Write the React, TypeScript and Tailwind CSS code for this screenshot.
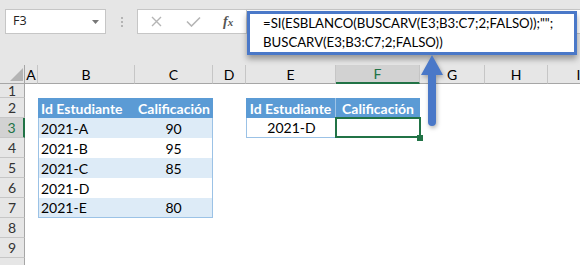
import React from "react";

function ColHeader({ label, selected }: { label: string; selected?: boolean }) {
  return (
    <div
      className={
        selected
          ? "flex items-center justify-center bg-[#d2d2d2] border-r border-r-[#c6c6c6] border-b-2 border-b-[#217346] text-[#217346]"
          : "flex items-center justify-center bg-[#e6e6e6] border-r border-r-[#c6c6c6] border-b border-b-[#a6a6a6]"
      }
    >
      {label}
    </div>
  );
}

function RowHeader({ n, selected, hideLabel }: { n: number; selected?: boolean; hideLabel?: boolean }) {
  return (
    <div
      className={
        selected
          ? "col-start-1 flex items-center justify-center bg-[#d2d2d2] border-b border-b-[#c6c6c6] border-r-2 border-r-[#217346] text-[#217346]"
          : "col-start-1 flex items-center justify-center bg-[#e6e6e6] border-b border-b-[#c6c6c6] border-r border-r-[#a6a6a6] text-[#333]"
      }
      style={{ gridRowStart: n + 1 }}
    >
      {hideLabel ? "" : n}
    </div>
  );
}

const rows1 = [
  { id: "2021-A", v: "90", band: true },
  { id: "2021-B", v: "95", band: false },
  { id: "2021-C", v: "85", band: true },
  { id: "2021-D", v: "", band: false },
  { id: "2021-E", v: "80", band: true },
];

export default function App() {
  const cols = ["A", "B", "C", "D", "E", "F", "G", "H", "I"];
  return (
    <div className="relative w-[580px] h-[265px] overflow-hidden bg-white font-[family-name:Lato,sans-serif] text-[14px] text-black">
      {/* toolbar */}
      <div className="h-[65px] bg-[#e6e6e6] flex items-start pt-[9px] pl-[5px]">
        <div className="w-[101px] h-[25px] bg-white border border-[#c6c6c6] flex items-center justify-between pl-[7px] pr-[6px]">
          <span className="font-[family-name:'Open_Sans',sans-serif] text-[12.5px] text-[#222]">F3</span>
          <svg width="7" height="4" viewBox="0 0 7 4">
            <path d="M0 0 L7 0 L3.5 4 Z" fill="#777" />
          </svg>
        </div>
        <div className="w-[31px] h-[25px] flex flex-col items-center justify-center gap-[2px]">
          <div className="w-[2px] h-[2px] bg-[#b4b4b4]" />
          <div className="w-[2px] h-[2px] bg-[#b4b4b4]" />
          <div className="w-[2px] h-[2px] bg-[#b4b4b4]" />
        </div>
        <div className="w-[110px] h-[25px] bg-white border border-[#c6c6c6] flex items-center">
          <svg width="11" height="11" viewBox="0 0 11 11" className="ml-[13px]">
            <path d="M1 1 L10 10 M10 1 L1 10" stroke="#b5b5b5" strokeWidth="1.4" />
          </svg>
          <svg width="15" height="11" viewBox="0 0 15 11" className="ml-[24px]">
            <path d="M1 5.5 L5.5 10 L14 1.5" stroke="#b5b5b5" strokeWidth="1.6" fill="none" />
          </svg>
          <span className="ml-[22px] font-[family-name:'Liberation_Serif',serif] italic text-[#555] text-[14px] leading-none font-bold">
            f<span className="text-[11px]">x</span>
          </span>
        </div>
        <div className="flex-1 h-[25px] bg-white border-y border-[#c6c6c6]" />
      </div>

      {/* sheet */}
      <div className="grid grid-cols-[25px_13px_97px_78px_33px_90px_84px_65px_63px_62px] grid-rows-[19px_14px_repeat(10,20px)]">
        {/* corner */}
        <div className="col-start-1 row-start-1 relative bg-[#e6e6e6] border-r border-r-[#a6a6a6] border-b border-b-[#a6a6a6]">
          <svg width="13" height="13" viewBox="0 0 13 13" className="absolute left-[10px] top-[3px]">
            <path d="M13 0 L13 13 L0 13 Z" fill="#b4b4b4" />
          </svg>
        </div>
        {cols.map((c) => (
          <ColHeader key={c} label={c} selected={c === "F"} />
        ))}
        {[1, 2, 3, 4, 5, 6, 7, 8, 9, 10].map((n) => (
          <RowHeader key={n} n={n} selected={n === 3} hideLabel={n === 10} />
        ))}

        {/* table 1: B2:C7 */}
        <div className="col-start-3 col-span-2 row-start-3 row-span-6 flex flex-col">
          <div className="h-[20px] flex bg-[#5b9bd5] text-white font-bold">
            <div className="w-[97px] pl-[3px] flex items-center">Id Estudiante</div>
            <div className="w-[78px] flex items-center justify-center">Calificación</div>
          </div>
          {rows1.map((r, i) => (
            <div
              key={r.id}
              className={
                (r.band ? "bg-[#ddebf7] " : "bg-white ") +
                (i === rows1.length - 1 ? "border-b " : "") +
                "h-[20px] flex border-x border-[#9bc2e6]"
              }
            >
              <div className="w-[96px] pl-[2px] flex items-center">{r.id}</div>
              <div className="w-[77px] flex items-center justify-center">{r.v}</div>
            </div>
          ))}
        </div>

        {/* table 2: E2:F3 */}
        <div className="col-start-6 col-span-2 row-start-3 row-span-2 flex flex-col">
          <div className="h-[20px] flex bg-[#5b9bd5] text-white font-bold">
            <div className="w-[90px] flex items-center justify-center border-r border-[#9dc3e6]">Id Estudiante</div>
            <div className="w-[84px] flex items-center justify-center">Calificación</div>
          </div>
          <div className="h-[20px] flex border-l border-b border-[#9bc2e6]">
            <div className="w-[89px] flex items-center justify-center">2021-D</div>
            <div className="relative w-[84px]">
              <div className="absolute -left-[1px] -top-[1px] -right-[1px] -bottom-[1px] border-2 border-[#217346]" />
              <div className="absolute -right-[3px] -bottom-[4px] w-[6px] h-[6px] bg-[#217346]" />
            </div>
          </div>
        </div>
      </div>

      {/* formula bar overlay */}
      <div className="absolute left-[247px] top-[11px] w-[330px] h-[44px] border-[3px] border-[#4a78c8] bg-white shadow-[0_4px_6px_rgba(0,0,0,0.35)] pl-[13px] text-[13.2px] leading-[19px] whitespace-nowrap text-black">
        <div>{'=SI(ESBLANCO(BUSCARV(E3;B3:C7;2;FALSO));"";'}</div>
        <div>{"BUSCARV(E3;B3:C7;2;FALSO))"}</div>
      </div>

      {/* arrow */}
      <svg
        width="30"
        height="78"
        viewBox="0 0 30 78"
        className="absolute left-[418px] top-[53px] drop-shadow-[1px_2px_2px_rgba(0,0,0,0.3)]"
      >
        <path d="M14 2 L25 22 L18 22 L18 69 A4 4 0 0 1 10 69 L10 22 L3 22 Z" fill="#4a78c8" />
      </svg>
    </div>
  );
}
